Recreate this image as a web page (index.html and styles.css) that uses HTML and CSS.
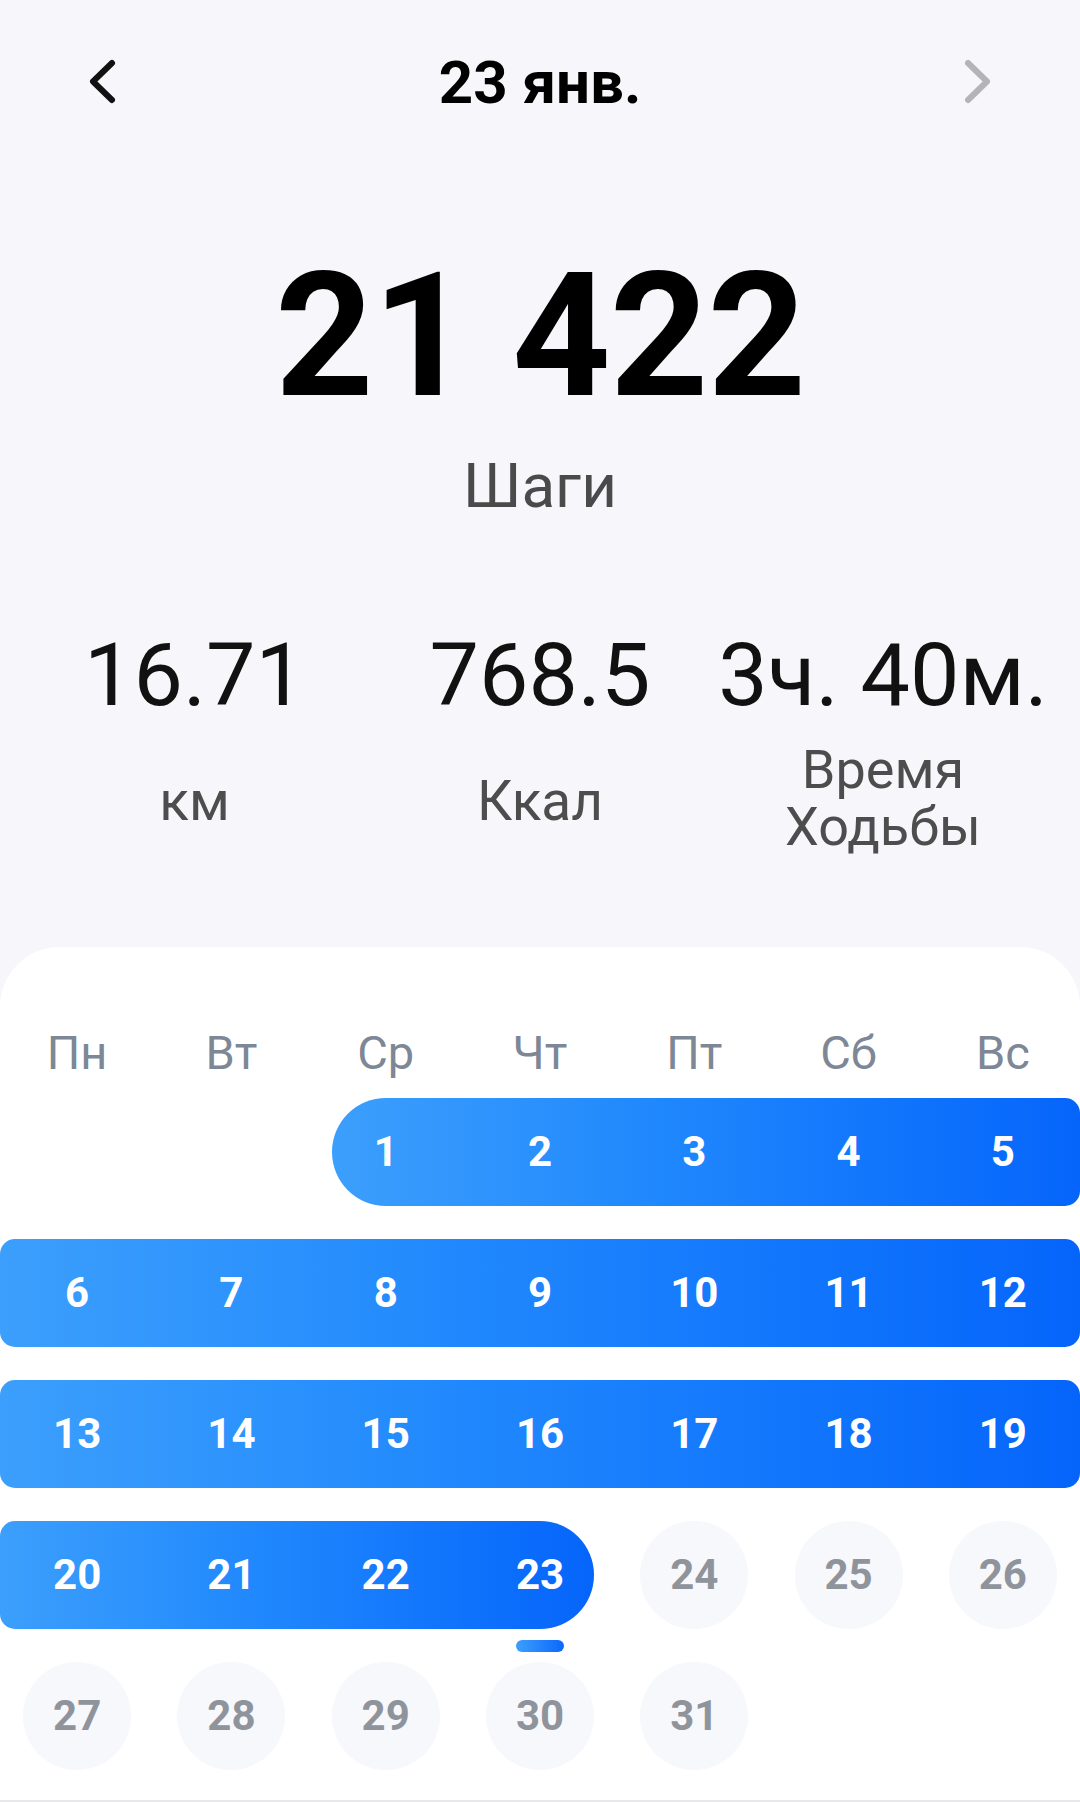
FILE: index.html
```html
<!DOCTYPE html>
<html lang="ru">
<head>
<meta charset="utf-8">
<title>Шаги</title>
<link rel="stylesheet" href="styles.css">
</head>
<body>
<div class="screen">
  <header class="topbar">
    <button class="nav-btn" aria-label="prev">
      <svg viewBox="0 0 40 60" width="40" height="60"><path d="M30 10 L11 28.5 L30 47" fill="none" stroke="#111" stroke-width="6" stroke-linecap="round" stroke-linejoin="round"/></svg>
    </button>
    <h1 class="date">23 янв.</h1>
    <button class="nav-btn" aria-label="next">
      <svg viewBox="0 0 40 60" width="40" height="60"><path d="M10 10 L29 28.5 L10 47" fill="none" stroke="#b3b3b8" stroke-width="6" stroke-linecap="round" stroke-linejoin="round"/></svg>
    </button>
  </header>

  <section class="summary">
    <div class="steps">21 422</div>
    <div class="steps-label">Шаги</div>
  </section>

  <section class="stats">
    <div class="stat">
      <div class="stat-value">16.71</div>
      <div class="stat-label"><span class="single">км</span></div>
    </div>
    <div class="stat">
      <div class="stat-value">768.5</div>
      <div class="stat-label"><span class="single">Ккал</span></div>
    </div>
    <div class="stat">
      <div class="stat-value">3ч. 40м.</div>
      <div class="stat-label"><span class="double">Время<br>Ходьбы</span></div>
    </div>
  </section>

  <section class="calendar">
    <div class="weekdays">
      <span>Пн</span><span>Вт</span><span>Ср</span><span>Чт</span><span>Пт</span><span>Сб</span><span>Вс</span>
    </div>

    <div class="week">
      <div class="band band-start"></div>
      <div class="day on c3">1</div>
      <div class="day on c4">2</div>
      <div class="day on c5">3</div>
      <div class="day on c6">4</div>
      <div class="day on c7">5</div>
    </div>

    <div class="week">
      <div class="band band-full"></div>
      <div class="day on c1">6</div>
      <div class="day on c2">7</div>
      <div class="day on c3">8</div>
      <div class="day on c4">9</div>
      <div class="day on c5">10</div>
      <div class="day on c6">11</div>
      <div class="day on c7">12</div>
    </div>

    <div class="week">
      <div class="band band-full"></div>
      <div class="day on c1">13</div>
      <div class="day on c2">14</div>
      <div class="day on c3">15</div>
      <div class="day on c4">16</div>
      <div class="day on c5">17</div>
      <div class="day on c6">18</div>
      <div class="day on c7">19</div>
    </div>

    <div class="week">
      <div class="band band-end"></div>
      <div class="day on c1">20</div>
      <div class="day on c2">21</div>
      <div class="day on c3">22</div>
      <div class="day on today c4">23</div>
      <div class="day off c5"><span class="dot">24</span></div>
      <div class="day off c6"><span class="dot">25</span></div>
      <div class="day off c7"><span class="dot">26</span></div>
    </div>

    <div class="week">
      <div class="day off c1"><span class="dot">27</span></div>
      <div class="day off c2"><span class="dot">28</span></div>
      <div class="day off c3"><span class="dot">29</span></div>
      <div class="day off c4"><span class="dot">30</span></div>
      <div class="day off c5"><span class="dot">31</span></div>
    </div>
  </section>
</div>
</body>
</html>
```

FILE: styles.css
```css
* { box-sizing: border-box; }

html, body {
  margin: 0;
  padding: 0;
}

body {
  background: #f7f7fb;
  font-family: Roboto, "Noto Sans", "Liberation Sans", sans-serif;
  color: #111;
}

.screen {
  width: 1080px;
  height: 1802px;
  display: flex;
  flex-direction: column;
  overflow: hidden;
}

/* top bar */
.topbar {
  height: 166px;
  display: flex;
  align-items: center;
  justify-content: space-between;
  padding: 0 82px;
  flex: none;
}

.nav-btn {
  width: 40px;
  height: 60px;
  padding: 0;
  border: 0;
  background: none;
  display: flex;
}

.date {
  margin: 0;
  font-size: 60px;
  line-height: 70px;
  font-weight: 700;
  color: #000;
}

/* summary */
.summary {
  flex: none;
  text-align: center;
}

.steps {
  margin-top: 84px;
  font-size: 172px;
  line-height: 172px;
  font-weight: 700;
  color: #000;
  letter-spacing: -1px;
}

.steps-label {
  margin-top: 28px;
  font-size: 62px;
  line-height: 72px;
  color: #4a4a4a;
}

/* stats */
.stats {
  flex: none;
  margin-top: 103px;
  display: grid;
  grid-template-columns: 331px 360px 326px;
  padding: 0 34px 0 29px;
}

.stat {
  display: flex;
  flex-direction: column;
  align-items: center;
  text-align: center;
}

.stat-value {
  font-size: 88px;
  line-height: 100px;
  color: #111;
  white-space: nowrap;
}

.stat-label {
  margin-top: 16px;
  height: 114px;
  display: flex;
  align-items: center;
  justify-content: center;
  color: #4d4d4d;
}

.single {
  font-size: 55px;
  line-height: 64px;
  padding-top: 6px;
}

.double {
  font-size: 54px;
  line-height: 57px;
}

/* calendar card */
.calendar {
  flex: 1;
  margin-top: 92px;
  background: #ffffff;
  border-radius: 60px 60px 0 0;
  padding-top: 78px;
  border-bottom: 2px solid #e8e8eb;
}

.weekdays {
  display: grid;
  grid-template-columns: repeat(7, 1fr);
  text-align: center;
  font-size: 47px;
  line-height: 56px;
  color: #7d8795;
}

.week {
  margin-top: 17px;
  height: 108px;
  display: grid;
  grid-template-columns: repeat(7, 1fr);
  grid-template-rows: 108px;
}

.week + .week {
  margin-top: 33px;
}

.band {
  grid-row: 1;
  background: linear-gradient(90deg, #3c9ffc 0%, #1f87fd 45%, #0565fb 100%);
}

.band-start {
  grid-column: 3 / 8;
  margin-left: 23px;
  border-radius: 54px 15px 15px 54px;
}

.band-full {
  grid-column: 1 / 8;
  border-radius: 15px;
}

.band-end {
  grid-column: 1 / 5;
  margin-right: 23px;
  border-radius: 15px 54px 54px 15px;
}

.day {
  grid-row: 1;
  position: relative;
  display: flex;
  align-items: center;
  justify-content: center;
  font-size: 42px;
  line-height: 108px;
  font-weight: 700;
}

.day.on {
  color: #ffffff;
}

.day.off {
  color: #8f949c;
}

.dot {
  width: 108px;
  height: 108px;
  border-radius: 50%;
  background: #f7f8fb;
  display: flex;
  align-items: center;
  justify-content: center;
}

.today::after {
  content: "";
  position: absolute;
  top: calc(100% + 11px);
  left: 50%;
  width: 48px;
  height: 12px;
  margin-left: -24px;
  border-radius: 6px;
  background: linear-gradient(90deg, #3c9ffc, #0b68fb);
}

.c1 { grid-column: 1; }
.c2 { grid-column: 2; }
.c3 { grid-column: 3; }
.c4 { grid-column: 4; }
.c5 { grid-column: 5; }
.c6 { grid-column: 6; }
.c7 { grid-column: 7; }
```
